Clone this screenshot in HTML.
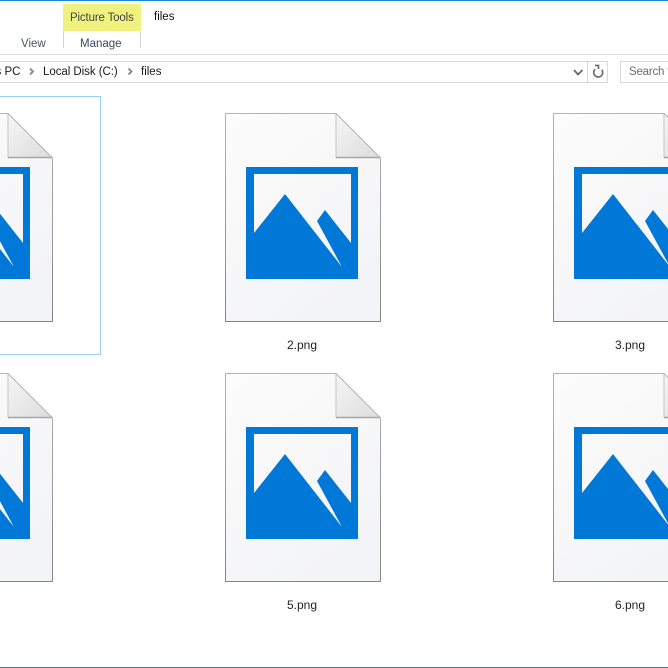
<!DOCTYPE html>
<html><head><meta charset="utf-8">
<style>
html,body{margin:0;padding:0;background:#fff;width:668px;height:668px;overflow:hidden}
body{position:relative;font-family:"Liberation Sans",sans-serif;color:#1a1a1a}
.t{position:absolute;font-size:11.5px;line-height:14px;white-space:nowrap}
.c{text-align:center;width:100px;color:#222;font-size:12px}
.b{position:absolute}
svg{position:absolute;left:0;top:0}
</style></head>
<body>
<svg width="668" height="668" viewBox="0 0 668 668">
<defs>
<linearGradient id="d" x1="0" y1="0" x2="0.6" y2="1"><stop offset="0" stop-color="#fcfcfc"/><stop offset="0.5" stop-color="#f8f8f9"/><stop offset="1" stop-color="#f3f4f7"/></linearGradient>
<linearGradient id="f" x1="0" y1="0" x2="1" y2="1"><stop offset="0" stop-color="#f6f6f6"/><stop offset="1" stop-color="#dcdcdc"/></linearGradient>
<linearGradient id="e" x1="0" y1="0" x2="0" y2="1"><stop offset="0" stop-color="#b4b4b4"/><stop offset="1" stop-color="#858585"/></linearGradient>
<g id="i">
<path d="M225.500 113.500H336L380.500 158V321.500H225.500Z" fill="url(#d)" stroke="url(#e)"/>
<path d="M336 113.500L380.500 158H336Z" fill="url(#f)"/>
<path d="M336 113.500V157.500" fill="none" stroke="#c4c4c4"/>
<path d="M336 157.500H380.500" fill="none" stroke="#a6a6a6" stroke-width="1.400"/>
<path d="M336 113.500L380.500 158" fill="none" stroke="#b8b8b8"/>
<path fill-rule="evenodd" fill="#0078d7" d="M246 167H358V279H246ZM254 174V233L285 194L342 267L317 221L325 210L351 243V174Z"/>
</g>
</defs>
<rect x="0" y="0" width="668" height="1" fill="#1b86d8"/>
<rect x="63" y="4" width="78" height="27" fill="#f0f280"/>
<rect x="63" y="31" width="1" height="17" fill="#d4d4d4"/>
<rect x="140" y="31" width="1" height="17" fill="#d4d4d4"/>
<rect x="0" y="54" width="668" height="1" fill="#dadbdc"/>
<path d="M0 61.500H607.500V82.500H0" fill="none" stroke="#d9d9d9"/>
<rect x="587" y="61" width="1" height="21" fill="#d9d9d9"/>
<path d="M668 61.500H620.500V82.500H668" fill="none" stroke="#d9d9d9"/>
<path d="M30 68.500L33 71.500L30 74.500" fill="none" stroke="#909090" stroke-width="2"/>
<path d="M128.500 68.500L131.500 71.500L128.500 74.500" fill="none" stroke="#909090" stroke-width="2"/>
<path d="M574 70L578 74.500L582.500 70" fill="none" stroke="#666" stroke-width="1.800"/>
<path d="M595 65.500H598.500V69M601.800 69.800A4.500 4.500 0 1 1 595.200 69.200" fill="none" stroke="#6f6f6f" stroke-width="1.700"/>
<rect x="-20" y="96.500" width="120.500" height="258" fill="#fff" stroke="#99d1ff"/>
<use href="#i" x="-328"/>
<use href="#i"/>
<use href="#i" x="328"/>
<use href="#i" x="-328" y="260"/>
<use href="#i" y="260"/>
<use href="#i" x="328" y="260"/>
</svg>
<div class="t" style="left:70px;top:11px;color:#444;letter-spacing:-.15px">Picture Tools</div>
<div class="t" style="left:154px;top:10px;color:#111">files</div>
<div class="t" style="left:21px;top:37px;color:#4a5560">View</div>
<div class="t" style="left:80px;top:37px;color:#3d4a5c">Manage</div>
<div class="t" style="left:-7px;top:65px">is PC</div>
<div class="t" style="left:43px;top:65px;letter-spacing:-.05px">Local Disk (C:)</div>
<div class="t" style="left:141px;top:65px">files</div>
<div class="t" style="left:629px;top:65px;color:#6d6d6d;letter-spacing:-.2px">Search f</div>
<div class="t c" style="left:252px;top:338px">2.png</div>
<div class="t c" style="left:580px;top:338px">3.png</div>
<div class="t c" style="left:252px;top:598px">5.png</div>
<div class="t c" style="left:580px;top:598px">6.png</div>
<div class="b" style="left:0;top:667px;width:668px;height:1px;background:#2a7fc0"></div>
</body></html>
